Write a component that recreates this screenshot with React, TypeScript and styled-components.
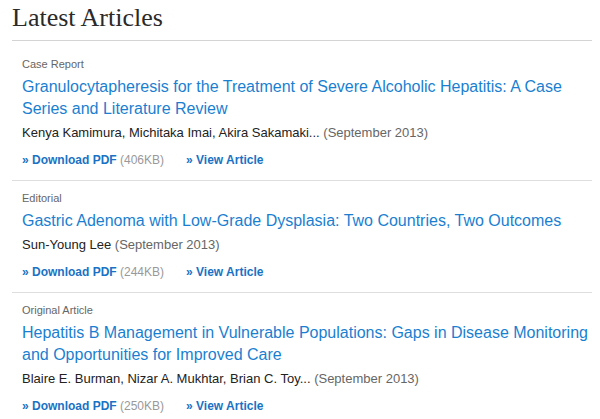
import React from "react";
import styled, { createGlobalStyle } from "styled-components";

const Global = createGlobalStyle`
  html, body { margin: 0; padding: 0; background: #fff; }
  body { font-family: "Liberation Sans", Arial, sans-serif; }
`;

const Wrap = styled.div`
  margin-left: 12px;
  width: 580px;
`;

const Heading = styled.h2`
  margin: 3px 0 0;
  padding-bottom: 7px;
  border-bottom: 1px solid #d4d4d4;
  font-family: "Liberation Serif", Georgia, serif;
  font-weight: normal;
  font-size: 26px;
  line-height: 30px;
  color: #2a2a2a;
`;

const List = styled.div`
  padding-top: 6px;
`;

const Article = styled.div`
  padding: 10px 0 12px 10px;
  border-bottom: 1px solid #dedede;
`;

const Category = styled.div`
  font-size: 11px;
  line-height: 14px;
  color: #666;
`;

const Title = styled.a`
  display: block;
  margin-top: 5px;
  font-size: 16px;
  line-height: 22px;
  color: #1a7fd1;
  text-decoration: none;
`;

const Authors = styled.div`
  margin-top: 4px;
  font-size: 13px;
  line-height: 18px;
  color: #222;
`;

const Date = styled.span`
  color: #666;
`;

const Links = styled.div`
  margin-top: 10px;
  display: flex;
  gap: 22px;
  font-size: 12px;
  line-height: 16px;
`;

const LinkItem = styled.span``;

const Link = styled.a`
  font-weight: bold;
  color: #1a72c4;
  text-decoration: none;
`;

const Size = styled.span`
  color: #999;
`;

const articles = [
  {
    cat: "Case Report",
    title:
      "Granulocytapheresis for the Treatment of Severe Alcoholic Hepatitis: A Case Series and Literature Review",
    authors: "Kenya Kamimura, Michitaka Imai, Akira Sakamaki...",
    size: "406KB",
  },
  {
    cat: "Editorial",
    title: "Gastric Adenoma with Low-Grade Dysplasia: Two Countries, Two Outcomes",
    authors: "Sun-Young Lee",
    size: "244KB",
  },
  {
    cat: "Original Article",
    title:
      "Hepatitis B Management in Vulnerable Populations: Gaps in Disease Monitoring and Opportunities for Improved Care",
    authors: "Blaire E. Burman, Nizar A. Mukhtar, Brian C. Toy...",
    size: "250KB",
  },
];

export default function App() {
  return (
    <>
      <Global />
      <Wrap>
        <Heading>Latest Articles</Heading>
        <List>
          {articles.map((a) => (
            <Article key={a.title}>
              <Category>{a.cat}</Category>
              <Title href="#">{a.title}</Title>
              <Authors>
                {a.authors} <Date>(September 2013)</Date>
              </Authors>
              <Links>
                <LinkItem>
                  <Link href="#">» Download PDF</Link> <Size>({a.size})</Size>
                </LinkItem>
                <LinkItem>
                  <Link href="#">» View Article</Link>
                </LinkItem>
              </Links>
            </Article>
          ))}
        </List>
      </Wrap>
    </>
  );
}
